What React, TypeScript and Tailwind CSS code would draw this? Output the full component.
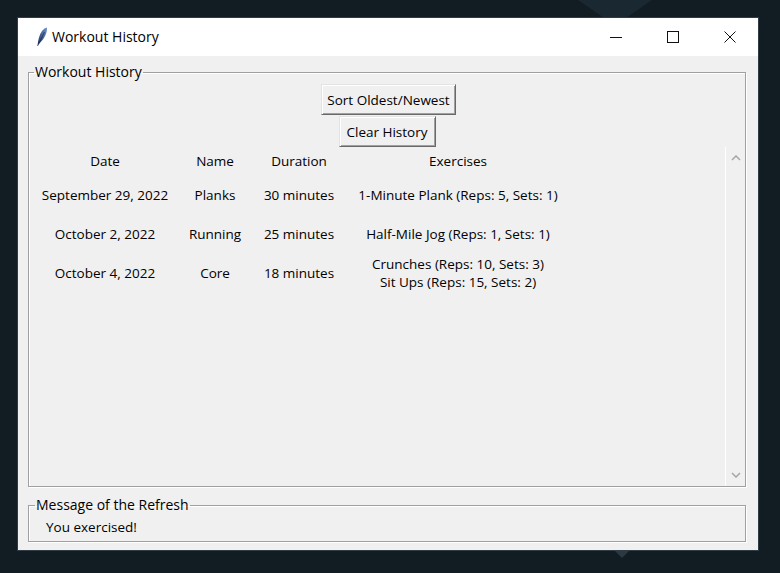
import React from "react";

const rows = [
  { date: "September 29, 2022", name: "Planks", dur: "30 minutes", ex: ["1-Minute Plank (Reps: 5, Sets: 1)"] },
  { date: "October 2, 2022", name: "Running", dur: "25 minutes", ex: ["Half-Mile Jog (Reps: 1, Sets: 1)"] },
  { date: "October 4, 2022", name: "Core", dur: "18 minutes", ex: ["Crunches (Reps: 10, Sets: 3)", "Sit Ups (Reps: 15, Sets: 2)"] },
];

function Feather() {
  return (
    <svg width="12" height="20" viewBox="0 0 12 20">
      <defs>
        <linearGradient id="fg" x1="0" y1="1" x2="1" y2="0">
          <stop offset="0" stopColor="#1d2f5a" />
          <stop offset="1" stopColor="#6f93d0" />
        </linearGradient>
      </defs>
      <path d="M1.5 19 C2 14 3 8 6 4 C7.5 2 9.5 0.8 11 0.5 C11.2 3 10.5 6.5 8.5 10 C6.8 13 4.5 15.5 2.6 17.2 L1.5 19 Z" fill="url(#fg)" />
      <path d="M1.6 19 L8.5 5" stroke="#0f1d3a" strokeWidth="0.6" fill="none" />
    </svg>
  );
}

function Btn({ children, className = "" }: { children: React.ReactNode; className?: string }) {
  return (
    <div
      className={
        "h-[31px] flex items-center justify-center bg-[#f0f0f0] border border-t-[#e3e3e3] border-l-[#e3e3e3] border-r-[#696969] border-b-[#696969] shadow-[inset_1px_1px_0_#ffffff,inset_-1px_-1px_0_#a0a0a0] text-black " +
        className
      }
    >
      {children}
    </div>
  );
}

export default function App() {
  return (
    <div
      className="w-[780px] h-[573px] bg-[#111c23] relative overflow-hidden pt-[18px] pl-[18px]"
      style={{ fontFamily: '"Open Sans", "Noto Sans", sans-serif' }}
    >
      <svg className="absolute left-0 top-0" width="780" height="573">
        <polygon points="578,0 652,0 626,18 604,18" fill="#1a2831" />
        <polygon points="614,550 630,550 622,558" fill="#2a3942" />
      </svg>
      <div className="relative w-[740px] h-[532px] flex flex-col bg-[#f0f0f0] shadow-[0_0_0_1px_#2f3d46]">
        {/* Title bar */}
        <div className="h-[38px] bg-white flex items-center shrink-0">
          <div className="w-[34px] flex justify-end pr-[4px]">
            <Feather />
          </div>
          <div className="text-[14px] leading-[20px] text-black">Workout History</div>
          <div className="flex-1" />
          <div className="flex h-full">
            <div className="w-[57px] flex items-center justify-center">
              <div className="w-[12px] h-[1px] bg-[#111]" />
            </div>
            <div className="w-[57px] flex items-center justify-center">
              <div className="w-[12px] h-[12px] border border-[#111]" />
            </div>
            <div className="w-[57px] flex items-center justify-center">
              <svg width="12" height="12" viewBox="0 0 12 12">
                <path d="M0.5 0.5 L11.5 11.5 M11.5 0.5 L0.5 11.5" stroke="#111" strokeWidth="1" />
              </svg>
            </div>
          </div>
        </div>

        {/* Content */}
        <div className="flex-1 flex flex-col pl-[10px] pr-[12px] pt-[7px] text-[13.5px] text-black">
          <fieldset className="border border-[#a0a0a0] shadow-[1px_1px_0_#ffffff,inset_1px_1px_0_#ffffff] h-[424px] min-w-0">
            <legend className="ml-[5px] px-[1px] leading-[18px] text-[14px]">Workout History</legend>
            <div className="h-[405px] flex flex-col">
              <div className="flex flex-col items-center pt-[3px] leading-[18px]">
                <Btn className="w-[135px] ml-[3px]">Sort Oldest/Newest</Btn>
                <Btn className="w-[97px] mt-[1px]">Clear History</Btn>
              </div>
              <div className="flex-1 flex min-h-0">
                <div className="flex-1 flex flex-col leading-[18px]">
                  <div className="h-[28px] grid grid-cols-[152px_68px_100px_218px] items-center text-center">
                    <div>Date</div>
                    <div>Name</div>
                    <div>Duration</div>
                    <div>Exercises</div>
                  </div>
                  {rows.map((r, i) => (
                    <div
                      key={i}
                      className={
                        "grid grid-cols-[152px_68px_100px_218px] items-center text-center " +
                        (i === 2 ? "h-[40px]" : "h-[39px]")
                      }
                    >
                      <div>{r.date}</div>
                      <div>{r.name}</div>
                      <div>{r.dur}</div>
                      <div className="whitespace-nowrap">
                        {r.ex.map((e, j) => (
                          <div key={j}>{e}</div>
                        ))}
                      </div>
                    </div>
                  ))}
                </div>
                <div className="w-[20px] border-l border-white flex flex-col items-center justify-between py-[8px]">
                  <svg width="10" height="6" viewBox="0 0 10 6">
                    <path d="M1 5 L5 1 L9 5" stroke="#a6a6a6" strokeWidth="1.5" fill="none" />
                  </svg>
                  <svg width="10" height="6" viewBox="0 0 10 6">
                    <path d="M1 1 L5 5 L9 1" stroke="#a6a6a6" strokeWidth="1.5" fill="none" />
                  </svg>
                </div>
              </div>
            </div>
          </fieldset>

          <fieldset className="mt-[9px] border border-[#a0a0a0] shadow-[1px_1px_0_#ffffff,inset_1px_1px_0_#ffffff] min-w-0">
            <legend className="ml-[6px] px-[1px] leading-[18px] text-[14px]">Message of the Refresh</legend>
            <div className="h-[27px] pt-[4px] pl-[17px] leading-[18px]">You exercised!</div>
          </fieldset>
        </div>
      </div>
    </div>
  );
}
